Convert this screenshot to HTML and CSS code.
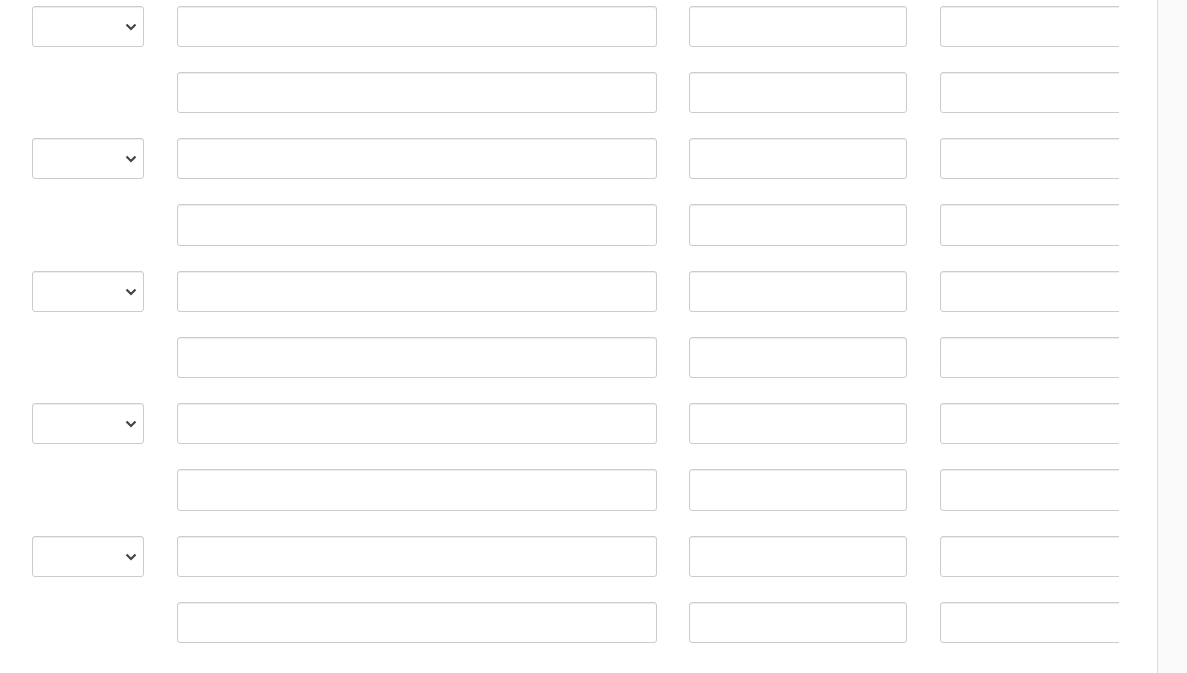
FILE: index.html
```html
<!DOCTYPE html>
<html>
<head>
<meta charset="utf-8">
<link rel="stylesheet" href="styles.css">
</head>
<body>
<div class="page">
  <div class="scroller">
    <div class="grid">
      <div class="sel-wrap"><select class="sel"><option></option></select><svg class="chev" width="12" height="8" viewBox="0 0 12 8"><path d="M1.5 1.5 L6 6 L10.5 1.5" fill="none" stroke="#444" stroke-width="2.2"/></svg></div>
      <input class="fc w1" type="text"><input class="fc w2" type="text"><input class="fc w3" type="text">
      <div></div>
      <input class="fc w1" type="text"><input class="fc w2" type="text"><input class="fc w3" type="text">

      <div class="sel-wrap"><select class="sel"><option></option></select><svg class="chev" width="12" height="8" viewBox="0 0 12 8"><path d="M1.5 1.5 L6 6 L10.5 1.5" fill="none" stroke="#444" stroke-width="2.2"/></svg></div>
      <input class="fc w1" type="text"><input class="fc w2" type="text"><input class="fc w3" type="text">
      <div></div>
      <input class="fc w1" type="text"><input class="fc w2" type="text"><input class="fc w3" type="text">

      <div class="sel-wrap"><select class="sel"><option></option></select><svg class="chev" width="12" height="8" viewBox="0 0 12 8"><path d="M1.5 1.5 L6 6 L10.5 1.5" fill="none" stroke="#444" stroke-width="2.2"/></svg></div>
      <input class="fc w1" type="text"><input class="fc w2" type="text"><input class="fc w3" type="text">
      <div></div>
      <input class="fc w1" type="text"><input class="fc w2" type="text"><input class="fc w3" type="text">

      <div class="sel-wrap"><select class="sel"><option></option></select><svg class="chev" width="12" height="8" viewBox="0 0 12 8"><path d="M1.5 1.5 L6 6 L10.5 1.5" fill="none" stroke="#444" stroke-width="2.2"/></svg></div>
      <input class="fc w1" type="text"><input class="fc w2" type="text"><input class="fc w3" type="text">
      <div></div>
      <input class="fc w1" type="text"><input class="fc w2" type="text"><input class="fc w3" type="text">

      <div class="sel-wrap"><select class="sel"><option></option></select><svg class="chev" width="12" height="8" viewBox="0 0 12 8"><path d="M1.5 1.5 L6 6 L10.5 1.5" fill="none" stroke="#444" stroke-width="2.2"/></svg></div>
      <input class="fc w1" type="text"><input class="fc w2" type="text"><input class="fc w3" type="text">
      <div></div>
      <input class="fc w1" type="text"><input class="fc w2" type="text"><input class="fc w3" type="text">
    </div>
  </div>
  <div class="gutter"></div>
  <aside class="side"></aside>
</div>
</body>
</html>
```

FILE: styles.css
```css
html, body {
  margin: 0;
  padding: 0;
  background: #fff;
  font-family: "Open Sans", "Liberation Sans", sans-serif;
  font-size: 14px;
  height: 100%;
  overflow: hidden;
}

.page {
  display: flex;
  height: 673px;
}

.scroller {
  width: 1119px;
  flex: none;
  overflow: hidden;
  padding-left: 32px;
  box-sizing: border-box;
}

.grid {
  display: grid;
  grid-template-columns: 113px 480px 219px 218px;
  grid-template-rows: 41px 41px 41px 42px 41px 41px 41px 42px 41px 41px;
  align-items: stretch;
  column-gap: 32px;
  row-gap: 25px;
  padding-top: 6px;
  width: max-content;
}

.gutter {
  width: 38px;
  flex: none;
}

.side {
  flex: 1;
  background: #f9f9f9;
  border-left: 1px solid #dcdcdc;
}

.fc {
  box-sizing: border-box;
  height: 100%;
  margin: 0;
  padding: 6px 12px;
  border: 1px solid #ccc;
  border-radius: 3px;
  background: #fff;
  box-shadow: inset 0 1px 1px rgba(0, 0, 0, 0.075);
  font: inherit;
  outline: none;
}

.w1 { width: 480px; }
.w2 { width: 218px; }
.w3 { width: 218px; }

.sel-wrap {
  position: relative;
  width: 112px;
  height: 41px;
}

.sel {
  appearance: none;
  -webkit-appearance: none;
  box-sizing: border-box;
  width: 112px;
  height: 41px;
  margin: 0;
  border: 1px solid #ccc;
  border-radius: 3px;
  background: #fff;
  box-shadow: inset 0 1px 1px rgba(0, 0, 0, 0.075);
  font: inherit;
  outline: none;
}

.chev {
  position: absolute;
  left: 93px;
  top: 17px;
  pointer-events: none;
}
```
